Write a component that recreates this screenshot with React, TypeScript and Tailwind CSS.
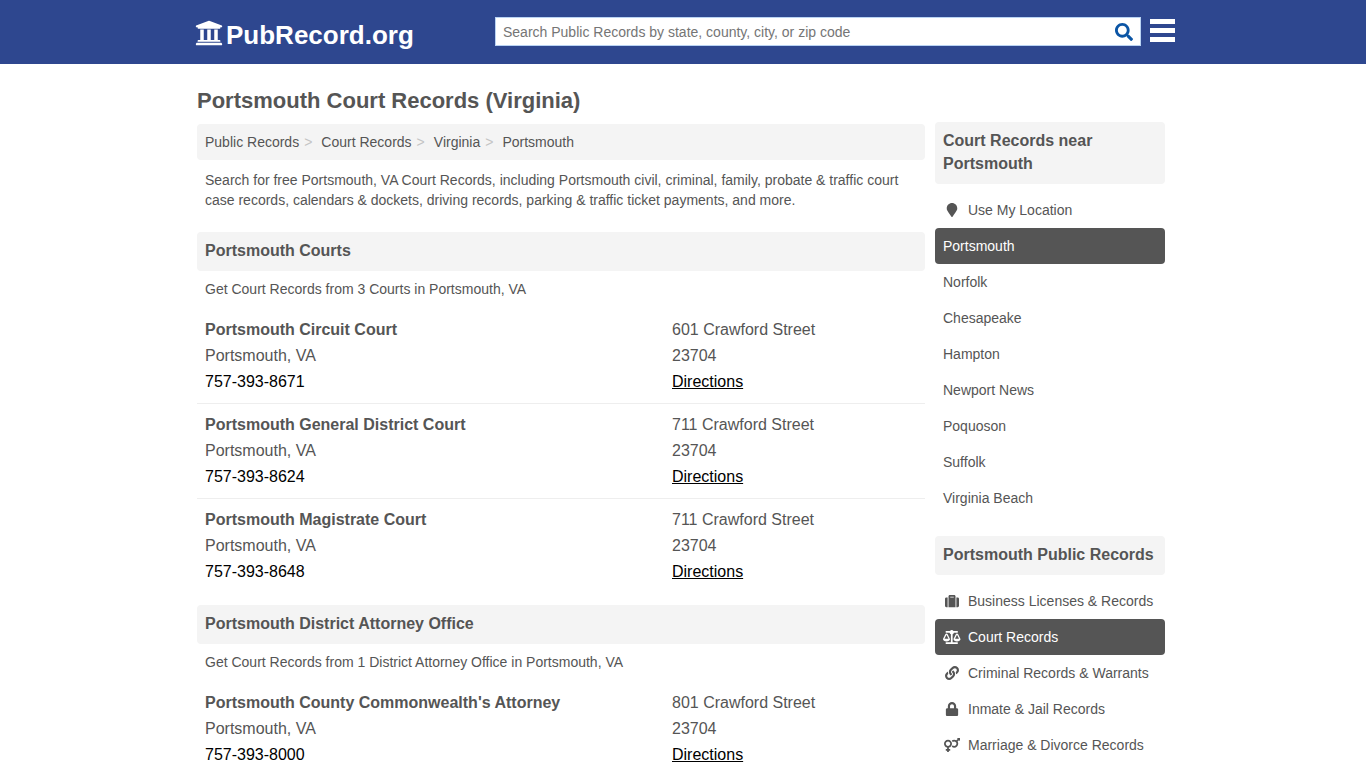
import type { ReactNode } from "react";
import {
  FaBalanceScale,
  FaLink,
  FaLock,
  FaMapMarker,
  FaSearch,
  FaSuitcase,
  FaUniversity,
  FaVenusMars,
} from "react-icons/fa";

type Court = { name: string; phone: string; street: string };

const courts: Court[] = [
  { name: "Portsmouth Circuit Court", phone: "757-393-8671", street: "601 Crawford Street" },
  { name: "Portsmouth General District Court", phone: "757-393-8624", street: "711 Crawford Street" },
  { name: "Portsmouth Magistrate Court", phone: "757-393-8648", street: "711 Crawford Street" },
];

const attorneys: Court[] = [
  { name: "Portsmouth County Commonwealth's Attorney", phone: "757-393-8000", street: "801 Crawford Street" },
];

const cities = [
  "Portsmouth",
  "Norfolk",
  "Chesapeake",
  "Hampton",
  "Newport News",
  "Poquoson",
  "Suffolk",
  "Virginia Beach",
];

const topics = [
  { label: "Business Licenses & Records", icon: <FaSuitcase /> },
  { label: "Court Records", icon: <FaBalanceScale className="h-[14px] w-[17.5px] shrink-0" />, active: true },
  { label: "Criminal Records & Warrants", icon: <FaLink /> },
  { label: "Inmate & Jail Records", icon: <FaLock /> },
  { label: "Marriage & Divorce Records", icon: <FaVenusMars className="h-4 w-4 shrink-0" /> },
];

function Heading({ children }: { children: ReactNode }) {
  return (
    <h2 className="rounded bg-[#f4f4f4] px-2 pt-[7px] pb-[9px] text-base leading-[23px] font-bold">{children}</h2>
  );
}

function CourtList({ items }: { items: Court[] }) {
  return (
    <ul className="mt-[10px]">
      {items.map((c) => (
        <li key={c.name} className="flex border-b border-[#eeeeee] p-2 text-base leading-[26px] last:border-b-0">
          <div className="w-[467px]">
            <h3 className="font-bold">{c.name}</h3>
            <p>Portsmouth, VA</p>
            <p className="text-black">{c.phone}</p>
          </div>
          <div>
            <p>{c.street}</p>
            <p>23704</p>
            <a className="text-black underline">Directions</a>
          </div>
        </li>
      ))}
    </ul>
  );
}

function SideItem({ label, icon, active }: { label: string; icon?: ReactNode; active?: boolean }) {
  return (
    <li
      className={
        active
          ? "flex h-9 items-center rounded bg-[#555555] px-2 text-sm text-white"
          : "flex h-9 items-center px-2 text-sm"
      }
    >
      {icon && <span className="mr-[7px] flex w-[18px] items-center justify-center">{icon}</span>}
      {label}
    </li>
  );
}

export default function App() {
  return (
    <div className="h-[768px] overflow-hidden bg-white font-['Liberation_Sans',Arial,sans-serif] text-[#555555]">
      <header className="h-16 bg-[#2e478f]">
        <div className="ml-[195px] flex w-[980px]">
          <a className="flex w-[300px] pt-[19px] text-white">
            <FaUniversity className="h-7 w-7" />
            <span className="ml-[3px] text-[26px] leading-8 font-bold">PubRecord.org</span>
          </a>
          <div className="mt-[17px] flex h-[29px] w-[646px] items-center justify-between border border-[#b9d3f3] bg-white pr-[7px] pl-[7px] text-sm text-[#757575]">
            <span>Search Public Records by state, county, city, or zip code</span>
            <FaSearch className="h-[18px] w-[18px] text-[#0b55a5]" />
          </div>
          <div className="mt-[19px] ml-[9px] flex w-[25px] flex-col gap-1">
            <span className="h-[5px] bg-white" />
            <span className="h-[5px] bg-white" />
            <span className="h-[5px] bg-white" />
          </div>
        </div>
      </header>

      <div className="ml-[197px] flex w-[968px] gap-[10px]">
        <main className="w-[728px]">
          <h1 className="mt-[22px] text-[22px] leading-[30px] font-bold">Portsmouth Court Records (Virginia)</h1>
          <nav className="mt-2 flex h-9 items-center rounded bg-[#f4f4f4] px-2 text-sm">
            <span>Public Records</span>
            <span className="mr-[9px] ml-[5px] text-[#c4c4c4]">&gt;</span>
            <span>Court Records</span>
            <span className="mr-[9px] ml-[5px] text-[#c4c4c4]">&gt;</span>
            <span>Virginia</span>
            <span className="mr-[9px] ml-[5px] text-[#c4c4c4]">&gt;</span>
            <span>Portsmouth</span>
          </nav>
          <p className="mt-[10px] mb-[22px] px-2 text-sm leading-5">
            Search for free Portsmouth, VA Court Records, including Portsmouth civil, criminal, family, probate &amp;
            traffic court case records, calendars &amp; dockets, driving records, parking &amp; traffic ticket
            payments, and more.
          </p>
          <section className="mb-3">
            <Heading>Portsmouth Courts</Heading>
            <p className="mt-2 px-2 text-sm leading-5">Get Court Records from 3 Courts in Portsmouth, VA</p>
            <CourtList items={courts} />
          </section>
          <section>
            <Heading>Portsmouth District Attorney Office</Heading>
            <p className="mt-2 px-2 text-sm leading-5">
              Get Court Records from 1 District Attorney Office in Portsmouth, VA
            </p>
            <CourtList items={attorneys} />
          </section>
        </main>

        <aside className="w-[230px] pt-[58px]">
          <Heading>Court Records near Portsmouth</Heading>
          <ul className="mt-2 mb-5">
            <SideItem label="Use My Location" icon={<FaMapMarker />} />
            {cities.map((city) => (
              <SideItem key={city} label={city} active={city === "Portsmouth"} />
            ))}
          </ul>
          <Heading>Portsmouth Public Records</Heading>
          <ul className="mt-2">
            {topics.map((t) => (
              <SideItem key={t.label} label={t.label} icon={t.icon} active={t.active} />
            ))}
          </ul>
        </aside>
      </div>
    </div>
  );
}
